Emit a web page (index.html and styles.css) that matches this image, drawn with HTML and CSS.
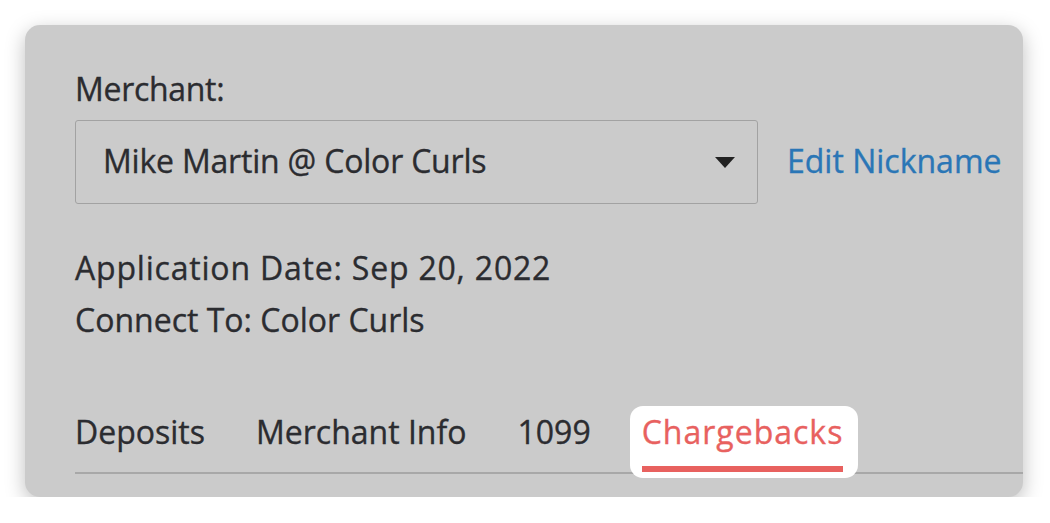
FILE: index.html
```html
<!DOCTYPE html>
<html lang="en">
<head>
<meta charset="utf-8">
<title>Merchant</title>
<link rel="stylesheet" href="styles.css">
</head>
<body>
  <div class="card">
    <div class="label">Merchant:</div>
    <div class="select-row">
      <div class="select">
        <span class="select-text">Mike Martin @ Color Curls</span>
        <svg class="caret" width="20" height="11" viewBox="0 0 20 11"><path d="M0 0 H20 L10 11 Z" fill="#222"/></svg>
      </div>
      <a class="link">Edit Nickname</a>
    </div>
    <div class="info">
      <div class="info-line date">Application Date: Sep 20, 2022</div>
      <div class="info-line">Connect To: Color Curls</div>
    </div>
    <div class="tabs">
      <div class="tab"><span class="tab-text">Deposits</span></div>
      <div class="tab"><span class="tab-text">Merchant Info</span></div>
      <div class="tab"><span class="tab-text">1099</span></div>
      <div class="tab active"><span class="tab-text">Chargebacks</span></div>
    </div>
  </div>
</body>
</html>
```
FILE: styles.css
```css
html, body {
  margin: 0;
  padding: 0;
  background: #ffffff;
}
body {
  font-family: "Open Sans", "Liberation Sans", sans-serif;
  font-size: 32px;
  font-weight: 400;
  color: #2b2c30;
  -webkit-text-stroke: 0.35px currentColor;
}
.card {
  box-sizing: border-box;
  width: 998px;
  height: 472px;
  margin: 25px 0 0 25px;
  padding: 44px 0 0 50px;
  background: #cbcbcb;
  border-radius: 15px;
  box-shadow: 0 6px 20px rgba(0, 0, 0, 0.26);
}
.label {
  line-height: 40px;
  margin-bottom: 11px;
  letter-spacing: -0.3px;
}
.select-row {
  display: flex;
  align-items: center;
}
.select {
  box-sizing: border-box;
  width: 683px;
  height: 84px;
  border: 1.5px solid #a2a2a2;
  border-radius: 3px;
  display: flex;
  align-items: center;
  justify-content: space-between;
  padding: 0 22px 0 27px;
}
.select-text {
  line-height: 40px;
  padding-bottom: 2px;
  letter-spacing: -0.2px;
}
.caret {
  display: block;
}
.link {
  margin-left: 29px;
  color: #2a76b6;
  line-height: 40px;
  padding-bottom: 2px;
}
.info {
  margin-top: 38px;
  line-height: 52px;
}
.date {
  letter-spacing: 0.8px;
}
.tabs {
  margin-top: 66px;
  display: flex;
  gap: 51px;
  border-bottom: 2px solid #a8a8a8;
}
.tab {
  line-height: 40px;
}
.tab-text {
  display: block;
  padding-bottom: 14px;
  border-bottom: 6px solid transparent;
}
.tab.active {
  background: #ffffff;
  border-radius: 13px;
  padding: 6px 15px 6px 12px;
  margin: -6px -15px -6px -12px;
}
.tab.active .tab-text {
  color: #e8615f;
  border-bottom-color: #e8615f;
  letter-spacing: 1px;
}
```
